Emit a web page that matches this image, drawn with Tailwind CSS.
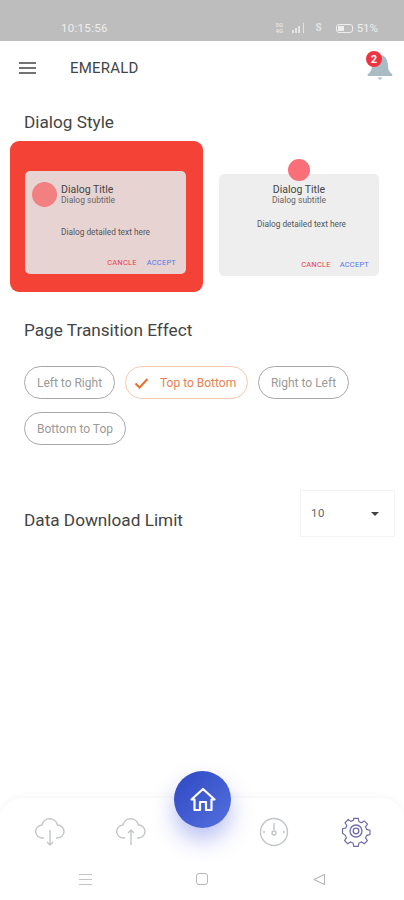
<!DOCTYPE html>
<html lang="en">
<head>
  <meta charset="UTF-8">
  <title>Emerald</title>
  <script src="https://cdn.jsdelivr.net/npm/@tailwindcss/browser@4"></script>
</head>
<body class="bg-white font-['Roboto',sans-serif] text-[#333]">
  <div class="relative flex h-[900px] w-[404px] flex-col overflow-hidden">
    <!-- status bar -->
    <div class="flex h-[41px] items-end justify-between bg-[#bdbdbd] pb-[6px] pl-[61px] pr-[26px] text-[11.500px] leading-[14px] text-[#eeeeee]">
      <span class="tracking-[0.3px]">10:15:56</span>
      <div class="flex items-center">
        <span class="w-[10px] text-[6px] font-bold leading-[6px] opacity-80">5G 4G</span>
        <div class="ml-[7px] flex items-end gap-[1px] opacity-80">
          <span class="h-[3px] w-[2px] bg-[#eeeeee]"></span>
          <span class="h-[5px] w-[2px] bg-[#eeeeee]"></span>
          <span class="h-[7px] w-[2px] bg-[#eeeeee]"></span>
          <span class="ml-[2px] h-[10px] w-[1px] bg-[#eeeeee]"></span>
        </div>
        <span class="ml-[11px] text-[10px] font-bold leading-[14px] opacity-80">S</span>
        <div class="ml-[14px] h-[9px] w-[17px] rounded-[3px] border border-[#eeeeee] p-[1px]"><div class="h-full w-1/2 bg-[#eeeeee]"></div></div>
        <span class="ml-[4px]">51%</span>
      </div>
    </div>

    <!-- header -->
    <div class="relative flex h-[54px] items-center pl-[19px]">
      <svg width="17" height="12" viewBox="0 0 17 12" class="shrink-0">
        <path d="M0 1h17M0 6h17M0 11h17" stroke="#444" stroke-width="1.400" fill="none"/>
      </svg>
      <span class="ml-[34px] text-[15px] tracking-[0.2px] text-[#444]">EMERALD</span>
      <svg width="26" height="30" viewBox="0 0 26 30" class="absolute left-[367px] top-[11px]">
        <path d="M13 3C7.500 3 5 8 5 14c0 4-2 7-4.500 8.500 0 .8.500 1.500 1.500 1.500h22c1 0 1.500-.7 1.500-1.500C23 21 21 18 21 14c0-6-2.500-11-8-11z" fill="#a9bcc4"/>
        <path d="M10.500 25.500h5L13 28z" fill="#a9bcc4"/>
      </svg>
      <span class="absolute left-[366px] top-[10px] flex h-[16px] w-[16px] items-center justify-center rounded-full bg-[#ef3340] text-[11px] font-bold leading-none text-white">2</span>
    </div>

    <!-- dialog style -->
    <h2 class="ml-[24px] mt-[15px] text-[17.200px] leading-[24px] text-[#444]">Dialog Style</h2>
    <div class="ml-[10px] mt-[7px] flex items-start">
      <div class="flex h-[151px] w-[193px] justify-center rounded-[9px] bg-[#f44336] pt-[30px]">
        <div class="mr-[2px] flex h-[103px] w-[161px] flex-col rounded-[5px] bg-[#e8d3d3] px-[7px] pt-[11px]">
          <div class="flex items-center gap-[4px]">
            <span class="h-[25px] w-[25px] shrink-0 rounded-full bg-[#f28080]"></span>
            <div>
              <p class="text-[10.500px] leading-[10px] text-[#444]">Dialog Title</p>
              <p class="text-[8.500px] leading-[10px] text-[#666]">Dialog subtitle</p>
            </div>
          </div>
          <p class="mt-[20px] text-center text-[8.300px] leading-[10px] text-[#555]">Dialog detailed text here</p>
          <div class="mt-[21px] flex justify-end gap-[10px] pr-[3px] text-[7.500px] leading-[10px] tracking-[0.2px]">
            <span class="text-[#e8414f]">CANCLE</span>
            <span class="text-[#4f78e8]">ACCEPT</span>
          </div>
        </div>
      </div>
      <div class="relative ml-[16px] mt-[33px] flex h-[102px] w-[160px] flex-col items-center rounded-[5px] bg-[#eeeeee] pt-[11px]">
        <span class="absolute -top-[15px] left-[69px] h-[22px] w-[22px] rounded-full bg-[#fb7078]"></span>
        <p class="text-[10.500px] leading-[10px] text-[#444]">Dialog Title</p>
        <p class="text-[8.500px] leading-[10px] text-[#666]">Dialog subtitle</p>
        <p class="ml-[5px] mt-[14px] text-[8.300px] leading-[10px] text-[#555]">Dialog detailed text here</p>
        <div class="mt-[31px] flex w-full justify-end gap-[9px] pr-[10px] text-[7.500px] leading-[10px] tracking-[0.2px]">
          <span class="text-[#e8414f]">CANCLE</span>
          <span class="text-[#4f78e8]">ACCEPT</span>
        </div>
      </div>
    </div>

    <!-- transition chips -->
    <h2 class="ml-[24px] mt-[26px] text-[17.200px] leading-[24px] text-[#444]">Page Transition Effect</h2>
    <div class="ml-[24px] mt-[24px] flex w-[340px] flex-wrap gap-x-[10px] gap-y-[13px] text-[12px] leading-none">
      <span class="flex h-[33px] w-[91px] items-center justify-center rounded-full border border-[#a8a8a8] text-[#9a9a9a]">Left to Right</span>
      <span class="flex h-[33px] w-[123px] items-center rounded-full border border-[#f6c9ae] pl-[8px] text-[#ea8050]">
        <svg width="15" height="12" viewBox="0 0 15 12" class="shrink-0"><path d="M1.500 6.500l4 4L13.500 2" stroke="#e8702a" stroke-width="2" fill="none"/></svg>
        <span class="ml-[11px]">Top to Bottom</span>
      </span>
      <span class="flex h-[33px] w-[91px] items-center justify-center rounded-full border border-[#a8a8a8] text-[#9a9a9a]">Right to Left</span>
      <span class="flex h-[33px] w-[102px] items-center justify-center rounded-full border border-[#a8a8a8] text-[#9a9a9a]">Bottom to Top</span>
    </div>

    <!-- download limit -->
    <div class="ml-[24px] mt-[44px] flex w-[371px] items-start justify-between">
      <span class="mt-[19px] text-[17.200px] leading-[24px] text-[#444]">Data Download Limit</span>
      <div class="mt-[1px] flex h-[47px] w-[95px] items-center justify-between border border-[#f4f4f4] pl-[10px] pr-[15px] pt-[1px] text-[11.500px] text-[#666]">
        <span class="tracking-[0.5px]">10</span>
        <span class="h-0 w-0 border-x-[4.500px] border-t-[4.500px] border-x-transparent border-t-[#444]"></span>
      </div>
    </div>

    <!-- bottom nav -->
    <div class="absolute bottom-0 left-0 h-[102px] w-[404px] rounded-t-[22px] bg-white shadow-[0_-2px_6px_rgba(0,0,0,0.035)]">
      <div class="relative flex h-[49px] items-end pl-[35px]">
        <svg width="30" height="30" viewBox="0 0 30 30" fill="none" stroke="#c2c6c8" stroke-width="1.400">
          <path d="M9 21H7.500a6.500 6.500 0 0 1-.6-13A8 8 0 0 1 22.500 8a6.500 6.500 0 0 1 0 13H21"/>
          <path d="M15 13v15M12 25l3 3 3-3"/>
        </svg>
        <svg width="30" height="30" viewBox="0 0 30 30" fill="none" stroke="#c2c6c8" stroke-width="1.400" class="ml-[51px]">
          <path d="M9 21H7.500a6.500 6.500 0 0 1-.6-13A8 8 0 0 1 22.500 8a6.500 6.500 0 0 1 0 13H21"/>
          <path d="M15 28V13M12 16l3-3 3 3"/>
        </svg>
        <svg width="30" height="30" viewBox="0 0 30 30" fill="none" stroke="#c2c6c8" stroke-width="1.400" class="ml-[113px]">
          <circle cx="15" cy="15" r="13.500"/>
          <path d="M15 6v7M4 15h2M24 15h2"/>
          <circle cx="15" cy="16" r="2"/>
        </svg>
        <svg width="32" height="32" viewBox="0 0 32 32" fill="none" stroke="#6e6aa8" stroke-width="1.300" class="ml-[51px]">
          <path d="M13.500 2h5l.8 3.600 2.800 1.200 3.100-2 3.500 3.500-2 3.100 1.200 2.800 3.600.8v5l-3.600.8-1.200 2.800 2 3.100-3.500 3.500-3.100-2-2.800 1.200-.8 3.600h-5l-.8-3.600-2.800-1.200-3.100 2-3.500-3.500 2-3.100-1.200-2.800L1 18.500v-5l3.600-.8 1.200-2.800-2-3.100 3.500-3.500 3.100 2 2.800-1.200z" transform="translate(1.600 1.600) scale(.9)"/>
          <circle cx="16" cy="16" r="6"/>
          <circle cx="16" cy="16" r="2.800"/>
        </svg>
        <button class="absolute left-[174px] -top-[27px] flex h-[57px] w-[57px] items-center justify-center rounded-full bg-gradient-to-br from-[#2f48c2] to-[#5470de] shadow-[0_12px_22px_rgba(84,100,226,0.4)]">
          <svg width="26" height="25" viewBox="0 0 26 25" fill="none" stroke="#fff" stroke-width="2.200" stroke-linejoin="round">
            <path d="M1.500 12.500 13 2l11.500 10.500h-3V23h-5.500v-8h-6v8H4.500V12.500z"/>
          </svg>
        </button>
      </div>
      <!-- android nav -->
      <div class="flex h-[53px] items-center pt-[11px] pl-[79px]">
        <svg width="13" height="13" viewBox="0 0 13 13" fill="none" stroke="#c4c4c4" stroke-width="1.200"><path d="M0 1.500h13M0 6.500h13M0 11.500h13"/></svg>
        <span class="ml-[104px] h-[12px] w-[12px] rounded-[3px] border border-[#b8b8b8]"></span>
        <svg width="13" height="13" viewBox="0 0 13 13" fill="none" stroke="#b8b8b8" stroke-width="1.200" stroke-linejoin="round" class="ml-[105px]"><path d="M1 6.500 11.500 1.500v10z"/></svg>
      </div>
    </div>
  </div>
</body>
</html>
